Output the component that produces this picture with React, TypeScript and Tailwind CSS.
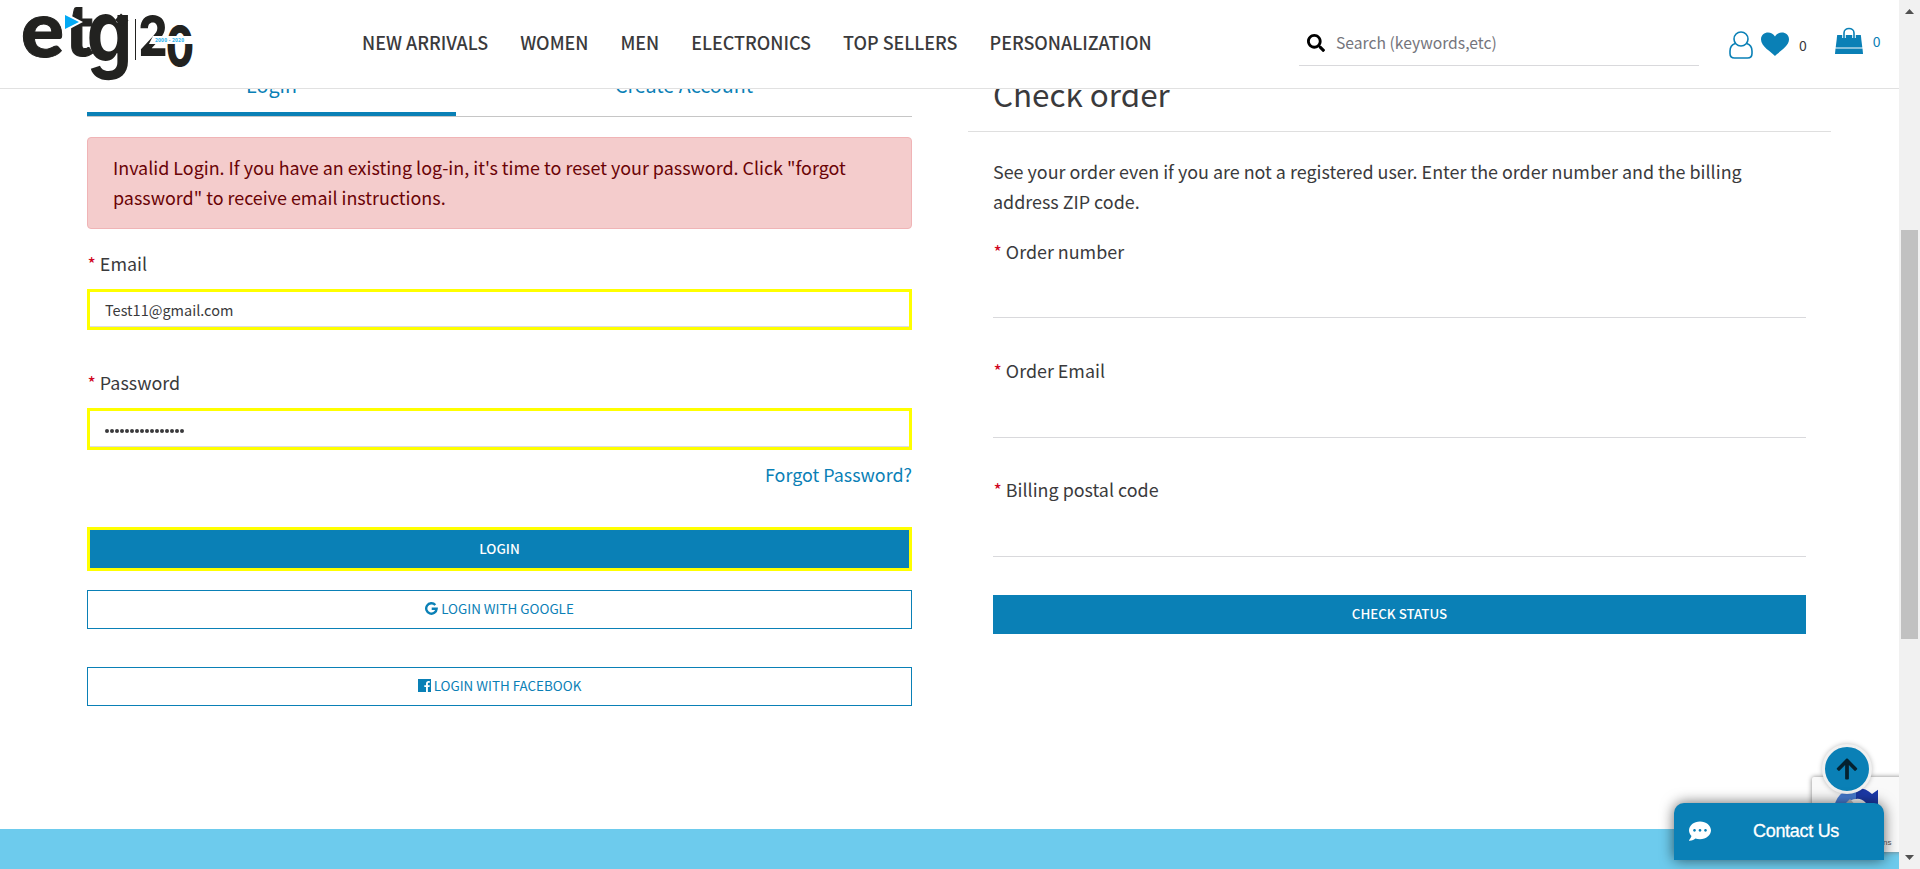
import type { ReactNode } from "react";
import { FaSearch, FaArrowUp, FaCommentDots } from "react-icons/fa";

const NAV = ["NEW ARRIVALS", "WOMEN", "MEN", "ELECTRONICS", "TOP SELLERS", "PERSONALIZATION"];

function Logo() {
  return (
    <svg className="block h-[88px] w-[200px]" viewBox="0 0 200 88" aria-label="etg 20">
      <g fill="#222220" fontFamily="Lato, sans-serif" fontWeight="900" stroke="#222220" strokeWidth="1">
        <text x="21" y="57" fontSize="78" textLength="43" lengthAdjust="spacingAndGlyphs">e</text>
        <text x="65" y="56" fontSize="73" textLength="28" lengthAdjust="spacingAndGlyphs">t</text>
      </g>
      <text x="86.500" y="62" fontSize="86" fontFamily="Inter, sans-serif" fontWeight="700" fill="#222220" textLength="46" lengthAdjust="spacingAndGlyphs">g</text>
      <path d="M115 20 121 13.500 128.500 20.500 122 26Z" fill="#222220" />
      <path d="M64 12 83 22 64 32Z" fill="#fff" />
      <path d="M65 15 79 22 65 29Z" fill="#03a9f4" />
      <path d="M135.500 19V60" stroke="#222220" strokeWidth="1" />
      <g fill="#222220" fontFamily="Inter, sans-serif" fontWeight="800" fontSize="55">
        <text x="138.500" y="56" textLength="29" lengthAdjust="spacingAndGlyphs">2</text>
        <text x="166" y="65.500" textLength="28" lengthAdjust="spacingAndGlyphs">0</text>
      </g>
      <path d="M153 36H194V44H149Z" fill="#fff" />
      <text x="155" y="42" fontSize="5" fontFamily="Noto Sans, sans-serif" fontWeight="700" fill="#2bb1ee" textLength="29">2000 - 2020</text>
    </svg>
  );
}

function PersonIcon() {
  return (
    <svg className="block h-[28px] w-[24px]" viewBox="0 0 24 28" fill="none" stroke="#0a80b6" strokeWidth="1.6">
      <circle cx="12" cy="8" r="7" />
      <path d="M6.200 12.600C3 13.800 1 16.500 1 20v2.500C1 25.500 2.500 27 5.500 27h13c3 0 4.500-1.500 4.500-4.500V20c0-3.500-2-6.200-5.200-7.400" />
    </svg>
  );
}

function BagIcon() {
  return (
    <svg className="block h-[28px] w-[28px]" viewBox="0 0 28 28">
      <path d="M2.200 8H25.800L27.300 20.500H.7Z" fill="#0a80b6" />
      <path d="M.5 21.600H27.500L28 27H0Z" fill="#0a80b6" />
      <path d="M9 11V6c0-6 10-6 10 0v5" fill="none" stroke="#fff" strokeWidth="3.600" />
      <path d="M9 11V6c0-6 10-6 10 0v5" fill="none" stroke="#0a80b6" strokeWidth="1.600" />
    </svg>
  );
}

function GoogleIcon() {
  return (
    <svg className="block h-[13px] w-[13px]" viewBox="0 0 13 13" fill="none" stroke="#0a80b6" strokeWidth="2.400">
      <path d="M10.300 3A5.200 5.200 0 1 0 11.600 6.800H6.700" />
    </svg>
  );
}

function FacebookIcon() {
  return (
    <svg className="block h-[13px] w-[13px]" viewBox="0 0 13 13">
      <path d="M0 0H13V13H0Z" fill="#0a80b6" />
      <path d="M8 13V8H6.300V6.200H8V4.700C8 3 9 2.100 10.500 2.100h1.300v1.700h-.9c-.8 0-1 .4-1 1v1.400h1.900L11.500 8H9.900v5Z" fill="#fff" />
    </svg>
  );
}

function Label({ children }: { children: ReactNode }) {
  return (
    <div className="-mt-px flex h-[30px] items-center gap-[4px] pl-[0.500px] text-[17.900px] leading-[30px]">
      <span className="text-[#d0021b]">*</span>
      <span>{children}</span>
    </div>
  );
}

export default function App() {
  return (
    <div className="flex h-[869px] w-[1920px] overflow-hidden bg-white font-['Noto_Sans_CJK_SC',sans-serif] text-[#3a3a3c]">
      <div className="relative flex h-full w-[1899px] flex-col overflow-hidden">
        <header className="flex h-[89px] shrink-0 border-b border-[#e1e1e1]">
          <div className="w-[362px]"><Logo /></div>
          <nav className="flex w-[937px] items-start gap-[32px] pt-[27px] text-[17.960px] leading-[30px] font-medium">
            {NAV.map((n) => <span key={n} className="whitespace-nowrap">{n}</span>)}
          </nav>
          <div className="flex h-[66px] w-[400px] items-start border-b border-[#d9d9dc] pl-[8px] pt-[34px]">
            <FaSearch className="size-[18px] text-black" />
            <span className="-mt-[5px] ml-[11px] text-[15.700px] leading-[28px] text-[#75757c]">Search (keywords,etc)</span>
          </div>
          <div className="flex items-start pl-[30px]">
            <div className="pt-[31px]"><PersonIcon /></div>
            <svg className="ml-[8px] mt-[32px] h-[25px] w-[28px]" viewBox="0 0 28 25">
              <path d="M14 24C10.500 20 0 14.500 0 7.500 0 0 10-2 14 4.500 18-2 28 0 28 7.500 28 14.500 17.500 20 14 24Z" fill="#0a80b6" />
            </svg>
            <span className="ml-[10px] mt-[32px] text-[14px] leading-[26px]">0</span>
            <div className="ml-[28px] mt-[27px]"><BagIcon /></div>
            <span className="ml-[10px] mt-[28px] text-[14px] leading-[26px] text-[#0a80b6]">0</span>
          </div>
        </header>

        <main className="h-[740px] shrink-0 overflow-hidden">
          <div className="-mt-[20px] flex">
            <section className="ml-[87px] w-[825px]">
              <div className="flex h-[48px] border-b border-[#c6c6c6] text-center text-[19.700px] leading-[32px] text-[#0a80b6]">
                <div className="w-[369px] border-b-4 border-[#0a80b6]">Login</div>
                <div className="w-[456px]">Create Account</div>
              </div>
              <div className="mt-[20px] h-[92px] rounded-[4px] border border-[#f0b4b6] bg-[#f4cccc] px-[25px] pt-[14px] text-[17.910px] leading-[30px] text-[#6a0306]">
                Invalid Login. If you have an existing log-in, it's time to reset your password. Click "forgot<br />password" to receive email instructions.
              </div>
              <div className="mt-[20px]"><Label>Email</Label></div>
              <div className="mt-[11px] flex h-[41px] items-center border-[3px] border-[#ffff00] pl-[15px] text-[14.500px] leading-[30px] shadow-[inset_0_-1px_0_#dcdce0]">Test11@gmail.com</div>
              <div className="mt-[38px]"><Label>Password</Label></div>
              <div className="mt-[11px] flex h-[42px] items-center gap-px border-[3px] border-[#ffff00] pl-[15px] shadow-[inset_0_-1px_0_#dcdce0]">
                {Array.from({ length: 16 }, (_, i) => <i key={i} className="mt-[3px] size-[4px] rounded-full bg-[#3a3a3c]" />)}
              </div>
              <div className="mt-[9px] flex h-[30px] justify-end text-[17.900px] leading-[30px] text-[#0a80b6]">Forgot Password?</div>
              <div className="mt-[38px] flex h-[44px] items-center justify-center border-[3px] border-[#ffff00] bg-[#0a80b6] pb-[2px] text-[13.400px] font-medium text-white">LOGIN</div>
              <div className="mt-[19px] flex h-[39px] items-center justify-center gap-[3px] border border-[#0a80b6] pb-[2px] text-[13.400px] text-[#0a80b6]"><GoogleIcon /><span>LOGIN WITH GOOGLE</span></div>
              <div className="mt-[38px] flex h-[39px] items-center justify-center gap-[3px] border border-[#0a80b6] pb-[2px] text-[13.400px] text-[#0a80b6]"><FacebookIcon /><span>LOGIN WITH FACEBOOK</span></div>
            </section>

            <section className="ml-[56px] w-[863px]">
              <div className="h-[63px] border-b border-[#dfdfdf] pl-[25px] text-[31.400px] leading-[49px]">Check order</div>
              <div className="w-[838px] pl-[25px]">
                <p className="mt-[24px] text-[17.920px] leading-[30px]">See your order even if you are not a registered user. Enter the order number and the billing<br />address ZIP code.</p>
                <div className="mt-[21px] flow-root h-[81px] border-b border-[#d9d9dc]"><Label>Order number</Label></div>
                <div className="mt-[38px] flow-root h-[82px] border-b border-[#d9d9dc]"><Label>Order Email</Label></div>
                <div className="mt-[37px] flow-root h-[82px] border-b border-[#d9d9dc]"><Label>Billing postal code</Label></div>
                <div className="mt-[38px] flex h-[39px] items-center justify-center bg-[#0a80b6] pb-[2px] text-[13.300px] font-medium text-white">CHECK STATUS</div>
              </div>
            </section>
          </div>
        </main>
        <footer className="h-[40px] shrink-0 bg-[#6dcbed]" />

        <div className="absolute left-[1812px] top-[777px] h-[75px] w-[120px] rounded-[2px] bg-[#f9f9f9] shadow-[0_0_5px_#808080]">
          <svg className="absolute left-[20px] top-[9px] size-[46px]" viewBox="0 0 46 46">
            <path d="M2 25A22 22 0 0 1 24 2V13A10 10 0 0 0 14 25Z" fill="#4a80d8" />
            <path d="M24 2Q33 1 40 8L47 3V22H29L34 17Q29 12 24 13Z" fill="#1c3aa9" />
            <path d="M9 22 18 13 26 22Z" fill="#bcbcc0" />
          </svg>
          <span className="absolute left-[71px] top-[61px] font-['Liberation_Sans',sans-serif] text-[8px] leading-[10px] text-[#555]">ns</span>
        </div>
        <div className="absolute left-[1821.500px] top-[744px] flex size-[50px] items-center justify-center rounded-full border-[3.500px] border-[#f0f0f0] bg-[#0a80b6] shadow-[0_0_5px_rgba(0,0,0,0.25)]">
          <FaArrowUp className="size-[24px] text-[#04222f]" />
        </div>
        <div className="absolute left-[1674px] top-[803px] flex h-[57px] w-[210px] items-center rounded-t-[10px] bg-[#0a80b6] pb-px pl-[15px] font-['Liberation_Sans',sans-serif] text-[18px] tracking-[-0.300px] text-white shadow-[0_0_14px_rgba(0,0,0,0.6)]">
          <FaCommentDots className="size-[22px]" />
          <span className="ml-[42px] [-webkit-text-stroke:0.300px_white]">Contact Us</span>
        </div>
      </div>

      <div className="flex w-[21px] flex-col items-center bg-[#f1f1f1]">
        <svg className="mt-[9px] h-[5px] w-[9px]" viewBox="0 0 9 5"><path d="M0 5 4.500 0 9 5Z" fill="#505050" /></svg>
        <div className="mt-[216px] h-[409px] w-[17px] bg-[#c1c1c1]" />
        <svg className="mt-[216px] h-[5px] w-[9px]" viewBox="0 0 9 5"><path d="M0 0H9L4.500 5Z" fill="#505050" /></svg>
      </div>
    </div>
  );
}
